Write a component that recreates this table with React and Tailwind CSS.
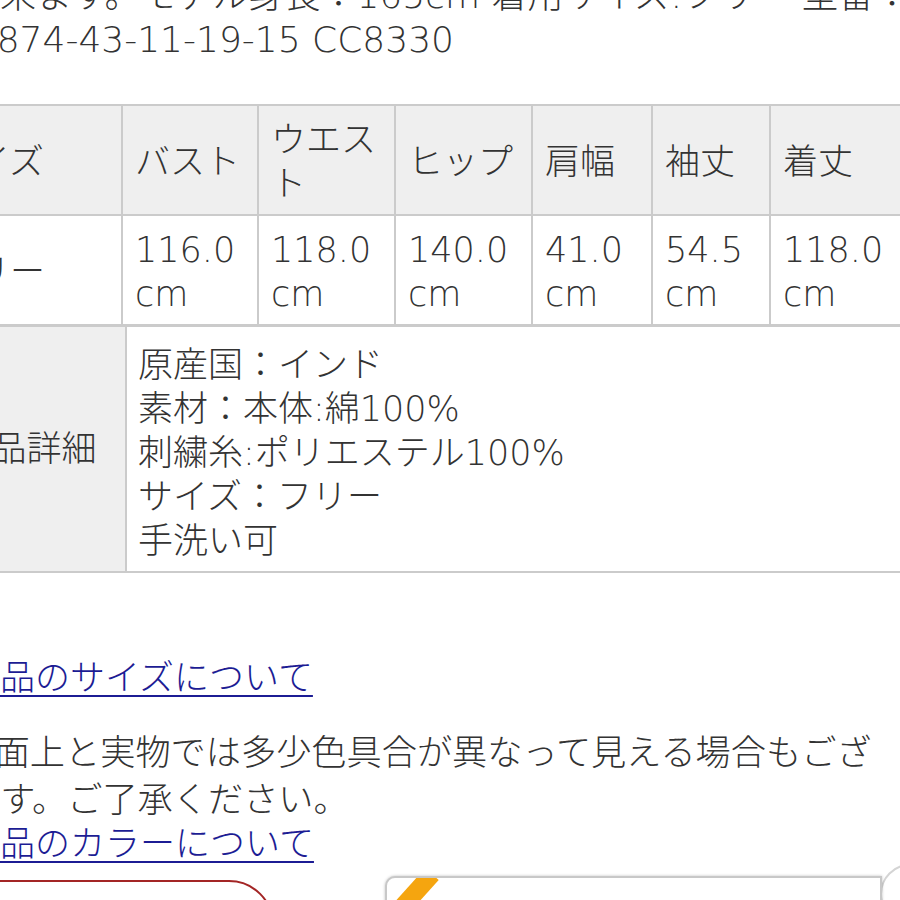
import React from "react";

const font = { fontFamily: '"DejaVu Sans", "Noto Sans CJK JP", sans-serif' };

function Cell({ children, head, className = "" }) {
  return (
    <div className={`${head ? "bg-[#efefef]" : "bg-white"} px-3 pt-[12px] pb-[8px] flex items-center ${className}`}>
      <div>{children}</div>
    </div>
  );
}

export default function App() {
  const heads = ["サイズ", "バスト", "ウエスト", "ヒップ", "肩幅", "袖丈", "着丈"];
  const vals = ["フリー", "116.0 cm", "118.0 cm", "140.0 cm", "41.0 cm", "54.5 cm", "118.0 cm"];
  return (
    <div
      className="w-[900px] h-[900px] overflow-hidden bg-white text-[#333333] text-[35px] leading-[44px] font-light"
      style={font}
    >
      <div className="ml-[-74px] w-[1014px] mt-[-26px]">
        <div className="whitespace-nowrap text-[36px] pl-[2px]">
          <div>が出来ます。モデル身長：165cm 着用サイズ:フリー 型番：1</div>
          <div>201874-43-11-19-15 CC8330</div>
        </div>

        <div className="mt-[42px] grid grid-cols-[193px_134px_135px_135px_118px_116px_1fr] gap-[2px] bg-[#cbcbcb] border-2 border-b-[3px] border-[#cbcbcb]">
          {heads.map((h) => (
            <Cell head key={h}>
              {h === "ウエスト" ? (
                <>
                  ウエス
                  <br />ト
                </>
              ) : (
                h
              )}
            </Cell>
          ))}
          {vals.map((v, i) => (
            <Cell head={false} key={i} className={i === 0 ? "bg-[#fafafa]" : ""}>
              {v.includes(" ") ? (
                <>
                  {v.split(" ")[0]}
                  <br />
                  {v.split(" ")[1]}
                </>
              ) : (
                v
              )}
            </Cell>
          ))}
        </div>

        <div className="grid grid-cols-[197px_1fr] gap-[2px] bg-[#cbcbcb] border-2 border-t-0 border-[#cbcbcb]">
          <div className="bg-[#efefef] flex items-center justify-center">商品詳細</div>
          <div className="bg-white pl-[11px] pt-[16px] pb-[8px]">
            <div>原産国：インド</div>
            <div>素材：本体:綿100%</div>
            <div>刺繍糸:ポリエステル100%</div>
            <div>サイズ：フリー</div>
            <div>手洗い可</div>
          </div>
        </div>

        <div className="mt-[83px] pl-[4px]">
          <div className="pl-[35px]">
            <a className="text-[#1c1c94] underline decoration-2 underline-offset-[5px]">
              商品のサイズについて
            </a>
          </div>
          <p className="mt-[29px] text-[35.2px] leading-[47px] w-[945px]">
            ※画面上と実物では多少色具合が異なって見える場合もございます。ご了承ください。
          </p>
          <div className="pl-[35px] mt-[-1px]">
            <a className="text-[#1c1c94] underline decoration-2 underline-offset-[5px]">
              商品のカラーについて
            </a>
          </div>
        </div>

        <div className="flex mt-[14px] items-start">
          <div className="w-[350px] h-[60px] border-2 border-[#a32525] rounded-tr-[45px]" />
          <div className="ml-[111px] mt-[-4px] w-[500px] h-[60px] border-2 border-[#c8c8c8] rounded-tl-[10px] shadow-[0_0_3px_rgba(0,0,0,0.25)] relative overflow-hidden bg-white">
            <div className="absolute left-[36px] top-[-4px] w-[18px] h-[60px] bg-[#f5a50f] rotate-[42deg] origin-top" />
          </div>
          <div className="ml-[-2px] mt-[-16px] w-[60px] h-[60px] rounded-full border-2 border-[#d4d4d4] bg-white" />
        </div>
      </div>
    </div>
  );
}
